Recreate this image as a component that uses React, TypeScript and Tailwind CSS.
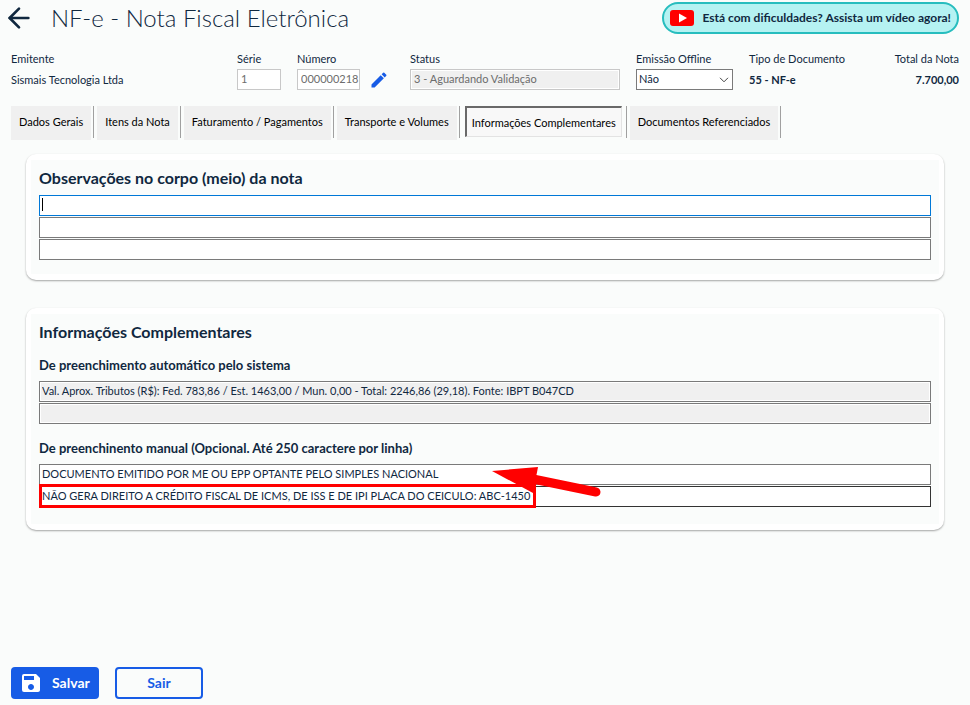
import React, { useState } from "react";
import { MdEdit, MdSave } from "react-icons/md";
import { ArrowLeft } from "lucide-react";
import clsx from "clsx";

type Tab = {
  key: string;
  label: string;
};

const tabs: Tab[] = [
  { key: "dados", label: "Dados Gerais" },
  { key: "itens", label: "Itens da Nota" },
  { key: "faturamento", label: "Faturamento / Pagamentos" },
  { key: "transporte", label: "Transporte e Volumes" },
  { key: "informacoes", label: "Informações Complementares" },
  { key: "documentos", label: "Documentos Referenciados" },
];

const lineClass =
  "block h-[21px] w-full border px-[2px] pb-[2px] text-[11px] leading-4 outline-none";

const fieldClass =
  "mt-[2px] block h-[21px] w-full border border-[#c8c8c8] pb-[2px] pl-[3px] text-[#6d6d6d] outline-none";

const Card = ({ children }: { children: React.ReactNode }) => (
  <section className="rounded-[10px] bg-white px-[5px] py-[6px] shadow-[0_1px_2px_rgba(0,0,0,0.35)]">
    <div className="bg-[#fafcfb] px-2">{children}</div>
  </section>
);

const VideoButton = () => (
  <button className="flex h-8 items-center gap-2 rounded-full border-2 border-[#27bdbe] bg-[#b5f2f2] px-[6px] text-[12px] font-bold">
    <svg width="24" height="16" viewBox="0 0 24 16">
      <rect width="24" height="16" rx="3" fill="#ff0000" />
      <path d="M9 3.5 17 8 9 12.5z" fill="#fff" />
    </svg>
    Está com dificuldades? Assista um vídeo agora!
  </button>
);

const InvoiceSummary = () => {
  const [offline, setOffline] = useState("Não");

  return (
    <div className="mt-[15px] flex px-[11px] text-[11px] leading-4">
      <div className="flex-1">
        <p>Emitente</p>
        <p className="mt-[5px]">Sismais Tecnologia Ltda</p>
      </div>
      <div className="mr-4 w-11">
        <label htmlFor="serie" className="block">
          Série
        </label>
        <input id="serie" defaultValue="1" className={clsx(fieldClass, "bg-white")} />
      </div>
      <div className="w-[63px]">
        <label htmlFor="numero" className="block">
          Número
        </label>
        <input id="numero" defaultValue="000000218" className={clsx(fieldClass, "bg-white")} />
      </div>
      <button aria-label="Editar número" className="mx-[9px] self-end text-[#175ce6]">
        <MdEdit size={20} />
      </button>
      <div className="mr-4 ml-3 w-[210px]">
        <label htmlFor="status" className="block">
          Status
        </label>
        <input
          id="status"
          readOnly
          defaultValue="3 - Aguardando Validação"
          className={clsx(fieldClass, "bg-[#f0f0f0] shadow-[inset_0_0_0_1px_#fff]")}
        />
      </div>
      <div className="mr-4 w-[97px]">
        <label htmlFor="offline" className="block">
          Emissão Offline
        </label>
        <div className="relative mt-[2px]">
          <select
            id="offline"
            value={offline}
            onChange={(e) => setOffline(e.target.value)}
            className="block h-[21px] w-full appearance-none border border-[#7a7a7a] bg-white px-[2px] pb-[2px] outline-none"
          >
            <option>Não</option>
            <option>Sim</option>
          </select>
          <svg
            className="pointer-events-none absolute top-2 right-1"
            width="10"
            height="6"
            viewBox="0 0 10 6"
            fill="none"
            stroke="#444"
          >
            <path d="M1 .8 5 4.8 9 .8" />
          </svg>
        </div>
      </div>
      <div className="w-[105px]">
        <p>Tipo de Documento</p>
        <p className="mt-[5px] font-bold">55 - NF-e</p>
      </div>
      <div className="w-[105px] text-right">
        <p>Total da Nota</p>
        <p className="mt-[5px] font-bold">7.700,00</p>
      </div>
    </div>
  );
};

const App = () => {
  const [active, setActive] = useState("informacoes");

  return (
    <div className="flex min-h-screen flex-col bg-[#fafcfb] font-['Lato',sans-serif] text-[#10283f]">
      <header className="flex h-9 items-center pr-[11px] pl-[3px]">
        <button aria-label="Voltar">
          <ArrowLeft size={32} />
        </button>
        <h1 className="ml-4 flex-1 text-[24px] leading-9 font-light">
          NF-e - Nota Fiscal Eletrônica
        </h1>
        <VideoButton />
      </header>

      <InvoiceSummary />

      <nav className="mt-4 flex gap-[3px] pl-[11px] text-[11px] text-black">
        {tabs.map((tab) => (
          <div key={tab.key} className="flex items-start gap-[2px]">
            <button
              onClick={() => setActive(tab.key)}
              className={clsx(
                "whitespace-nowrap",
                active === tab.key
                  ? "mx-[2px] h-[31px] border border-t-2 border-l-2 border-[#e3e3e3] border-t-[#696969] border-l-[#696969] bg-[#f8f8f8] px-[5px] pt-[2px]"
                  : "h-[34px] bg-[#f0f0f0] px-2 pb-[2px]"
              )}
            >
              {tab.label}
            </button>
            <span className="h-8 w-px bg-[#a0a0a0]" />
          </div>
        ))}
      </nav>

      <main className="mt-[14px] flex flex-col gap-7 px-[26px]">
        <Card>
          <h2 className="pt-2 text-[16px] leading-5 font-bold">
            Observações no corpo (meio) da nota
          </h2>
          <div className="mt-[7px] flex flex-col gap-px pb-[14px]">
            <div className="relative">
              <input
                aria-label="Observação 1"
                className={clsx(lineClass, "border-[#0078d7] bg-white caret-transparent")}
              />
              <span className="absolute top-[3px] left-[3px] h-[13px] w-px bg-black" />
            </div>
            <input
              aria-label="Observação 2"
              className={clsx(lineClass, "border-[#7a7a7a] bg-white")}
            />
            <input
              aria-label="Observação 3"
              className={clsx(lineClass, "border-[#7a7a7a] bg-white")}
            />
          </div>
        </Card>

        <Card>
          <h2 className="pt-2 text-[16px] leading-5 font-bold">Informações Complementares</h2>
          <h3 className="mt-[13px] text-[13px] leading-5 font-bold">
            De preenchimento automático pelo sistema
          </h3>
          <div className="mt-[6px] flex flex-col gap-px">
            <input
              aria-label="Informação automática 1"
              readOnly
              defaultValue="Val. Aprox. Tributos (R$): Fed. 783,86 / Est. 1463,00 / Mun. 0,00 - Total: 2246,86 (29,18). Fonte: IBPT B047CD"
              className={clsx(
                lineClass,
                "border-[#7a7a7a] bg-[#f0f0f0] shadow-[inset_0_0_0_1px_#fff]"
              )}
            />
            <input
              aria-label="Informação automática 2"
              readOnly
              className={clsx(
                lineClass,
                "border-[#7a7a7a] bg-[#f0f0f0] shadow-[inset_0_0_0_1px_#fff]"
              )}
            />
          </div>
          <h3 className="mt-[14px] text-[13px] leading-5 font-bold">
            De preenchinento manual (Opcional. Até 250 caractere por linha)
          </h3>
          <div className="relative mt-[6px] pb-[17px]">
            <div className="flex flex-col gap-px">
              <input
                aria-label="Informação manual 1"
                defaultValue="DOCUMENTO EMITIDO POR ME OU EPP OPTANTE PELO SIMPLES NACIONAL"
                className={clsx(lineClass, "border-[#7a7a7a] bg-white")}
              />
              <input
                aria-label="Informação manual 2"
                defaultValue="NÃO GERA DIREITO A CRÉDITO FISCAL DE ICMS, DE ISS E DE IPI PLACA DO CEICULO: ABC-1450"
                className={clsx(lineClass, "border-[#333] bg-white")}
              />
            </div>
            {/* red highlight and arrow over the manual lines */}
            <div className="pointer-events-none absolute top-5 left-0 h-6 w-[497px] border-3 border-[#ff0000]" />
            <svg
              className="pointer-events-none absolute top-[2px] left-[452px]"
              width="112"
              height="34"
              viewBox="0 0 112 34"
            >
              <path d="M1 5 47 1 42 27z" fill="#ff0000" />
              <path d="M42 13 105 26" stroke="#ff0000" strokeWidth="9" strokeLinecap="round" />
            </svg>
          </div>
        </Card>
      </main>

      <footer className="mt-auto flex gap-4 px-[11px] pb-[6px] text-[14px] font-bold">
        <button className="flex h-8 w-[88px] items-center gap-[9px] rounded-[4px] bg-[#175ce6] pl-2 text-white">
          <MdSave size={24} />
          <span className="pb-[2px]">Salvar</span>
        </button>
        <button className="h-8 w-[88px] rounded-[4px] border-2 border-[#175ce6] pb-[2px] text-[#175ce6]">
          Sair
        </button>
      </footer>
    </div>
  );
};

export default App;
